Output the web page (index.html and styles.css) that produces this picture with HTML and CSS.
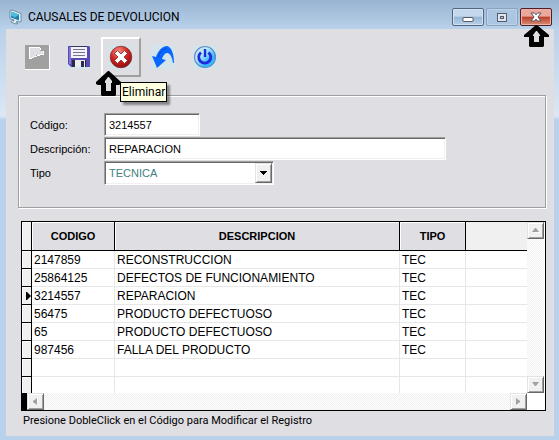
FILE: index.html
```html
<!DOCTYPE html>
<html lang="es">
<head>
<meta charset="utf-8">
<title>Causales de Devolucion</title>
<link rel="stylesheet" href="styles.css">
</head>
<body>
<div class="window">
  <header class="titlebar">
    <svg class="app-icon" width="16" height="16" viewBox="0 0 16 16" aria-hidden="true">
      <path d="M1 1.500L3 1l9 3.500v8l-2 .5-2-1-1 1.500 2 1-2 .5-5-2 1-1.500 2 .5v-1L1 9.500z" fill="#e8f1f5" stroke="#587c92" stroke-width=".8"/>
      <path d="M2 2.500l8 3v6l-8-3z" fill="#1b7fb0"/>
      <path d="M2 2.500l8 3-4 3-4-2z" fill="#49bfdf"/>
      <path d="M12 5l1 .5v7l-1 .5z" fill="#8fa9b6"/>
    </svg>
    <h1 class="title">CAUSALES DE DEVOLUCION</h1>
    <div class="window-buttons">
      <button class="win-btn" type="button" aria-label="Minimizar">
        <svg width="12" height="12" viewBox="0 0 12 12"><rect x="1" y="6.500" width="10" height="4" rx=".5" fill="#fff" stroke="#555b68"/></svg>
      </button>
      <button class="win-btn win-btn-max" type="button" aria-label="Maximizar">
        <svg width="12" height="12" viewBox="0 0 12 12"><rect x="1.500" y="2.500" width="9" height="8" fill="#dfe4ea" stroke="#555b68"/><rect x="4.500" y="5.500" width="3" height="2" fill="#a9c6e2" stroke="#555b68"/></svg>
      </button>
      <button class="win-btn win-btn-close" type="button" aria-label="Cerrar">
        <svg width="12" height="12" viewBox="0 0 12 12"><path d="M1 2h3.500L6 3.800 7.500 2H11L8 6l3 4H7.500L6 8.200 4.500 10H1l3-4z" fill="#fff" stroke="#565261"/></svg>
      </button>
    </div>
  </header>

  <main class="client">
    <div class="toolbar">
      <button class="tool" type="button" aria-label="Nuevo">
        <svg width="25" height="25" viewBox="0 0 25 25" shape-rendering="crispEdges"><path d="M0 0h25v25H0z" fill="#a0a0a0"/><path d="M0 24h24V0h1v25H0z" fill="#fff"/><path d="M5 3h10v3h4v3l-7 1-7 4z" fill="#dfdee3"/><path d="M4 2h11v1H5v11H4zM15 3h1v2h-1zM18 6h1v2h-1zM5 13h2v1H5zM7 12h2v1H7zM9 11h3v1H9zM12 10h3v1h-3zM15 9h4v1h-4z" fill="#fff"/></svg>
      </button>
      <button class="tool" type="button" aria-label="Guardar">
        <svg width="24" height="24" viewBox="0 0 24 24"><path d="M0 0h24v24H0z" fill="#d5e4ea"/><path d="M1 1h21l1 1v20H4l-3-3z" fill="#5b4ab0"/><path d="M2 2h2v17H2z" fill="#8775cf"/><path d="M4 1h16v12H4z" fill="#f4f3fa"/><path d="M4 1h16v1H4z" fill="#3a3564"/><path d="M6 4.500h12M6 7.500h12M6 10.500h12" stroke="#77758c"/><path d="M5 15h14v7H5z" fill="#292943"/><path d="M8 15h10v7H8z" fill="#e9edf1"/><path d="M14 16h3v6h-3z" fill="#29295a"/></svg>
      </button>
      <button class="tool tool-active" type="button" aria-label="Eliminar" aria-describedby="tip">
        <svg width="24" height="24" viewBox="0 0 24 24"><defs><radialGradient id="red" cx=".4" cy=".25" r=".8"><stop offset="0" stop-color="#f49384"/><stop offset=".5" stop-color="#d62422"/><stop offset="1" stop-color="#8a0a0c"/></radialGradient></defs><path d="M0 0h24v24H0z" fill="#d5e4ea"/><circle cx="12" cy="12" r="10.800" fill="url(#red)" stroke="#7d3737" stroke-width=".8"/><path d="M8.500 5.500L12 9l3.500-3.500 3 3L15 12l3.500 3.500-3 3L12 15l-3.500 3.500-3-3L9 12 5.500 8.500z" fill="#fff" stroke="#7a2323" stroke-width=".8"/></svg>
      </button>
      <button class="tool" type="button" aria-label="Deshacer">
        <svg width="24" height="24" viewBox="0 0 24 24"><path d="M0 0h24v24H0z" fill="#d5e4ea"/><path d="M1 11l4 1C7 6 11 1 16 1c5 1 7 9 7 17h-1c-1-6-3-10-6-10-2 0-4 3-5 6l4 1-9 8z" fill="#0868ff"/><path d="M7 13c2-6 5-10 9-9" fill="none" stroke="#004bea"/></svg>
      </button>
      <button class="tool" type="button" aria-label="Salir">
        <svg width="24" height="24" viewBox="0 0 24 24"><defs><linearGradient id="blue" x1="0" y1="0" x2="1" y2="1"><stop offset="0" stop-color="#d5d5e3"/><stop offset=".35" stop-color="#b9edfa"/><stop offset=".7" stop-color="#31b4ff"/><stop offset="1" stop-color="#43cbff"/></linearGradient></defs><path d="M0 0h24v24H0z" fill="#d5e4ea"/><circle cx="12" cy="12" r="10.500" fill="url(#blue)" stroke="#5b8fc8" stroke-width="1.200"/><path d="M8 7.500a6 6 0 1 0 7.500 0" fill="none" stroke="#202bdc" stroke-width="2.800"/><path d="M12 4v8" stroke="#202bdc" stroke-width="2.400"/></svg>
      </button>
      <div class="tooltip" id="tip" role="tooltip">Eliminar</div>
    </div>

    <form class="panel">
      <label for="codigo">Código:</label>
      <input class="field field-code" id="codigo" type="text" value="3214557">
      <label for="descripcion">Descripción:</label>
      <input class="field field-desc" id="descripcion" type="text" value="REPARACION">
      <label for="tipo">Tipo</label>
      <div class="combo">
        <select id="tipo"><option>TECNICA</option></select>
        <span class="combo-arrow" aria-hidden="true"><svg width="8" height="5" viewBox="0 0 8 5"><path d="M0 0h7v1H6v1H5v1H4v1H3V3H2V2H1V1H0z"/></svg></span>
      </div>
    </form>

    <div class="datagrid">
      <table class="records">
        <colgroup><col class="col-mark"><col class="col-code"><col class="col-desc"><col class="col-type"><col></colgroup>
        <thead>
          <tr><td class="mark"></td><th scope="col">CODIGO</th><th scope="col">DESCRIPCION</th><th scope="col">TIPO</th><td class="filler"></td></tr>
        </thead>
        <tbody>
          <tr><td class="mark"></td><td>2147859</td><td>RECONSTRUCCION</td><td>TEC</td><td></td></tr>
          <tr><td class="mark"></td><td>25864125</td><td>DEFECTOS DE FUNCIONAMIENTO</td><td>TEC</td><td></td></tr>
          <tr><td class="mark"><svg class="pointer" width="5" height="8" viewBox="0 0 5 8"><path d="M0 0h1l4 4-4 4H0z"/></svg></td><td>3214557</td><td>REPARACION</td><td>TEC</td><td></td></tr>
          <tr><td class="mark"></td><td>56475</td><td>PRODUCTO DEFECTUOSO</td><td>TEC</td><td></td></tr>
          <tr><td class="mark"></td><td>65</td><td>PRODUCTO DEFECTUOSO</td><td>TEC</td><td></td></tr>
          <tr><td class="mark"></td><td>987456</td><td>FALLA DEL PRODUCTO</td><td>TEC</td><td></td></tr>
          <tr><td class="mark"></td><td></td><td></td><td></td><td></td></tr>
          <tr><td class="mark"></td><td></td><td></td><td></td><td></td></tr>
        </tbody>
      </table>
      <div class="scroll scroll-v">
        <button class="scroll-btn" type="button" aria-label="Subir"><svg width="8" height="5" viewBox="0 0 8 5"><path d="M8 4v1H1z" fill="#fff"/><path d="M3 0h1l3 4H0z"/></svg></button>
        <button class="scroll-btn" type="button" aria-label="Bajar"><svg width="8" height="5" viewBox="0 0 8 5"><path d="M8 1L4 5H3z" fill="#fff"/><path d="M0 0h7L4 4H3z"/></svg></button>
      </div>
      <div class="scroll scroll-h">
        <button class="scroll-btn" type="button" aria-label="Izquierda"><svg width="5" height="8" viewBox="0 0 5 8"><path d="M4 0h1v8z" fill="#fff"/><path d="M4 0v7L0 4V3z"/></svg></button>
        <button class="scroll-btn" type="button" aria-label="Derecha"><svg width="5" height="8" viewBox="0 0 5 8"><path d="M5 4L0 8h1z" fill="#fff"/><path d="M0 0l4 3v1L0 7z"/></svg></button>
      </div>
    </div>
    <p class="hint">Presione DobleClick en el Código para Modificar el Registro</p>
  </main>

  <svg class="callout callout-delete" width="25" height="25" viewBox="0 0 25 25" aria-hidden="true"><path d="M12 0h1l12 11v2l-2 1h-3v10l-1 1H6l-1-1V14H2l-2-1v-2z"/><path d="M12 6h1l3 4v2h-1v8h-5v-8H9v-2z" fill="#dfdee3"/></svg>
  <svg class="callout callout-close" width="25" height="22" viewBox="0 0 25 22" aria-hidden="true"><path d="M12 0h1l12 10v2h-5v9l-1 1H6l-1-1v-9H0v-2z"/><path d="M12 6h1l3 4v1h-1v6h-5v-6H9v-1z" fill="#dfdee3"/></svg>
</div>
</body>
</html>
```

FILE: styles.css
```css
* {
  box-sizing: border-box;
}

body {
  margin: 0;
  font: 11px/14px "Liberation Sans", Arial, sans-serif;
  color: #000;
}

button {
  padding: 0;
  border: 0;
  font: inherit;
}

.window {
  position: relative;
  display: flex;
  flex-direction: column;
  min-height: 100vh;
  padding: 0 5px 4px 6px;
  background: linear-gradient(#99b4d1 0, #b9d1ea 29px, #dbe7f5 116px, #b9d1ea 120px);
}

.titlebar {
  display: flex;
  align-items: center;
  height: 29px;
  padding: 5px 2px 0 3px;
}

.app-icon {
  flex: none;
}

.title {
  flex: 1;
  margin: 0 0 0 3px;
  font: 12px/16px Roboto, "Noto Sans", sans-serif;
}

.window-buttons {
  display: flex;
  gap: 2px;
}

.win-btn {
  display: grid;
  place-items: center;
  width: 32px;
  height: 18px;
  border: 1px solid #53667f;
  border-radius: 2px;
  background: linear-gradient(#c4d8ec 0 45%, #98b5d3 50%, #b7d1eb);
  box-shadow: inset 0 0 0 1px #d3e2f2;
}

.win-btn-max {
  border-color: #8ba2bd;
  background: #abc6e2;
  box-shadow: inset 0 0 0 1px #bed3e9;
}

.win-btn-close {
  border-color: #521b27;
  background: linear-gradient(#eaa79b 0 45%, #bd4025 50%, #d58d77);
  box-shadow: inset 0 0 0 1px #e9b4aa;
}

.client {
  flex: 1;
  padding: 8px 8px 0 12px;
  background: #dfdee3;
}

.toolbar {
  position: relative;
  display: flex;
  gap: 2px;
  height: 58px;
  margin-left: -1px;
}

.tool {
  display: grid;
  place-items: center;
  width: 40px;
  height: 40px;
  background: none;
}

.tool-active {
  border: 2px solid;
  border-color: #fff #a0a0a0 #a0a0a0 #fff;
}

.tooltip {
  position: absolute;
  top: 45px;
  left: 103px;
  padding: 1px;
  border: 1px solid #000;
  background: #ffffe1;
  box-shadow: 3px 3px 2px rgb(0 0 0 / 40%);
  font: 12px/16px Roboto, "Noto Sans", sans-serif;
}

.panel {
  display: grid;
  grid-template-columns: 74px 1fr;
  row-gap: 1px;
  align-items: center;
  padding: 17px 11px 22px;
  border: 1px solid #a0a0a0;
  box-shadow: inset 1px 1px #fff, 1px 1px #fff;
}

.field,
.combo {
  height: 23px;
  border: 1px solid;
  border-color: #a0a0a0 #fff #fff #a0a0a0;
  background: #fff;
  box-shadow: inset 1px 1px #696969, inset -1px -1px #f0f0f0;
}

.field {
  padding: 0 4px;
  font: inherit;
}

.field-code {
  width: 96px;
}

.field-desc {
  width: 100%;
  max-width: 342px;
}

.combo {
  display: flex;
  width: 170px;
  height: 24px;
  padding: 1px;
}

.combo select {
  flex: 1;
  padding: 0 3px;
  border: 0;
  appearance: none;
  background: none;
  font: inherit;
  color: #3f7f7f;
}

.combo-arrow {
  display: grid;
  place-items: center;
  width: 17px;
}

.combo-arrow,
.scroll-btn {
  border: 1px solid;
  border-color: #e3e3e3 #696969 #696969 #e3e3e3;
  background: #f0f0f0;
  box-shadow: inset 1px 1px #fff, inset -1px -1px #a0a0a0;
}

.datagrid {
  display: grid;
  grid-template-columns: 1fr 18px;
  margin: 13px 0 0 3px;
  border: 1px solid #000;
  background: #fff;
}

.records {
  width: 100%;
  table-layout: fixed;
  border-spacing: 0;
  font-size: 12px;
  line-height: 14px;
}

.col-mark {
  width: 10px;
}

.col-code {
  width: 83px;
}

.col-desc {
  width: 285px;
}

.col-type {
  width: 66px;
}

.records td {
  height: 18px;
  padding: 0 2px;
  border: solid #e7e7e7;
  border-width: 0 1px 1px 0;
  white-space: nowrap;
}

.records td:last-child {
  border-right: 0;
}

.records tbody tr:last-child td {
  height: 16px;
  border-bottom: 0;
}

.records th,
.records thead td {
  height: 29px;
  padding: 0;
  border-color: #000;
}

.records th {
  border: solid #000;
  border-width: 0 1px 1px 0;
  background: #dfdee3;
  box-shadow: inset 1px 1px #fff;
  font-size: 11px;
}

.records .filler {
  background: #f0f0f0;
}

.records .mark {
  padding: 0 0 0 4px;
  border-color: #000;
  background: #f0f0f0;
  box-shadow: inset 1px 1px #fff;
}

.pointer {
  display: block;
}

.scroll {
  display: flex;
  justify-content: space-between;
  background: repeating-conic-gradient(#fff 0 25%, #f0f0f0 0 50%) 0 0 / 2px 2px;
}

.scroll-v {
  flex-direction: column;
  margin-right: 1px;
}

.scroll-h {
  border-left: 5px solid #000;
}

.scroll-btn {
  display: grid;
  place-items: center;
  width: 17px;
  height: 17px;
  fill: #a0a0a0;
}

.hint {
  margin: 3px 0 0 5px;
  font-family: Roboto, "Noto Sans", sans-serif;
}

.callout {
  position: absolute;
}

.callout-delete {
  top: 71px;
  left: 96px;
}

.callout-close {
  top: 25px;
  right: 10px;
}
```
